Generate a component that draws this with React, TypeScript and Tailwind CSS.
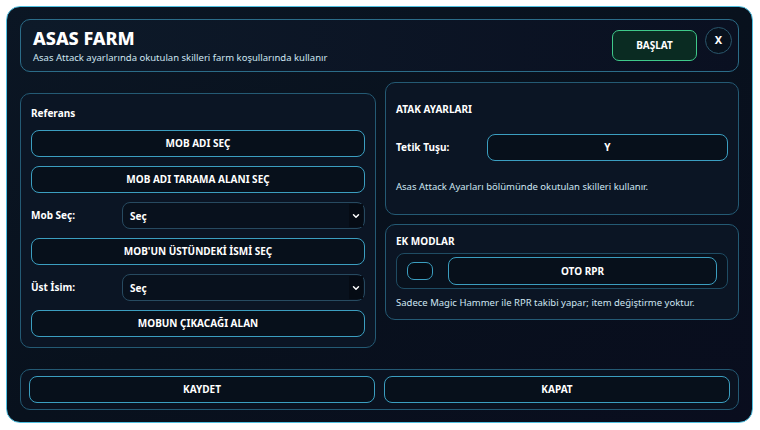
import { ChevronDown } from 'lucide-react';

const font = { fontFamily: '"Noto Sans", "Open Sans", sans-serif' };

function Btn({ label, className = '' }: { label: string; className?: string }) {
  return (
    <button className={`h-[27px] w-full rounded-[8px] border border-[#3b9ec0] bg-[#07101b] text-[10px] font-bold text-white ${className}`}>
      {label}
    </button>
  );
}

function SelectRow({ label }: { label: string }) {
  return (
    <div className="flex h-[27px] items-center">
      <span className="w-[91px] text-[10px] font-bold text-white">{label}</span>
      <div className="relative h-full flex-1 rounded-[8px] border border-[#274a60] bg-[#08111d]">
        <span className="absolute left-[7px] top-[6px] text-[10px] font-bold text-white">Seç</span>
        <span className="absolute right-[1px] top-[1px] flex h-[23px] w-[14px] items-center justify-center bg-[#050b14]">
          <ChevronDown size={10} strokeWidth={3.5} className="text-white" />
        </span>
      </div>
    </div>
  );
}

export default function App() {
  return (
    <div className="h-[430px] w-[760px] bg-white p-[6px] pr-[7px]" style={font}>
      <div className="flex h-[417px] w-[747px] flex-col gap-[10px] rounded-[14px] border border-[#4fbfe0] bg-gradient-to-br from-[#0b1624] via-[#08111d] to-[#090d1e] px-[13px] py-[12px]">
        {/* header */}
        <div className="flex h-[53px] shrink-0 items-center rounded-[10px] border border-[#2b6c88] bg-gradient-to-r from-[#0d1a29] to-[#0a1021] pl-[12px] pr-[6px]">
          <div className="flex-1">
            <div className="text-[18px] font-extrabold leading-[20px] text-white">ASAS FARM</div>
            <div className="mt-[4px] text-[9.5px] leading-[12px] text-[#cfe6f2]">Asas Attack ayarlarında okutulan skilleri farm koşullarında kullanır</div>
          </div>
          <button className="h-[31px] w-[85px] rounded-[7px] border border-[#3fc98a] bg-[#0a2b22] text-[10px] font-bold text-white">BAŞLAT</button>
          <button className="ml-[8px] mb-[11px] flex h-[27px] w-[27px] items-center justify-center rounded-full border border-[#2a566c] bg-[#08111d] text-[11px] font-bold text-white">X</button>
        </div>

        {/* content */}
        <div className="flex min-h-0 flex-1 gap-[9px]">
          <div className="flex w-[356px] flex-col gap-[9px] self-center rounded-[10px] border border-[#245a74] bg-[#0b1524] px-[10px] pb-[10px] pt-[12px]">
            <div className="mb-[1px] text-[10px] font-bold leading-[14px] text-white">Referans</div>
            <Btn label="MOB ADI SEÇ" />
            <Btn label="MOB ADI TARAMA ALANI SEÇ" />
            <SelectRow label="Mob Seç:" />
            <Btn label="MOB'UN ÜSTÜNDEKİ İSMİ SEÇ" />
            <SelectRow label="Üst İsim:" />
            <Btn label="MOBUN ÇIKACAĞI ALAN" />
          </div>

          <div className="flex flex-1 flex-col gap-[9px]">
            <div className="flex h-[133px] flex-col rounded-[10px] border border-[#245a74] bg-[#0b1524] px-[10px] pt-[19px]">
              <div className="text-[10px] font-bold leading-[14px] text-white">ATAK AYARLARI</div>
              <div className="mt-[18px] flex h-[27px] items-center">
                <span className="w-[91px] text-[10px] font-bold text-white">Tetik Tuşu:</span>
                <Btn label="Y" className="flex-1" />
              </div>
              <div className="mt-[19px] text-[9.5px] text-[#cfe6f2]">Asas Attack Ayarları bölümünde okutulan skilleri kullanır.</div>
            </div>

            <div className="flex h-[96px] flex-col rounded-[10px] border border-[#245a74] bg-[#0b1524] px-[10px] pt-[9px]">
              <div className="text-[10px] font-bold leading-[14px] text-white">EK MODLAR</div>
              <div className="mt-[5px] flex h-[36px] items-center gap-[15px] rounded-[8px] border border-[#1f4c63] bg-[#08111d] px-[10px]">
                <span className="h-[18px] w-[26px] rounded-[7px] border border-[#3b9ec0] bg-[#050b14]" />
                <Btn label="OTO RPR" className="h-[28px] flex-1" />
              </div>
              <div className="mt-[7px] text-[9.5px] text-[#cfe6f2]">Sadece Magic Hammer ile RPR takibi yapar; item değiştirme yoktur.</div>
            </div>
          </div>
        </div>

        {/* footer */}
        <div className="flex h-[41px] shrink-0 items-center gap-[9px] rounded-[10px] border border-[#245a74] bg-[#0a1220] px-[8px]">
          <Btn label="KAYDET" />
          <Btn label="KAPAT" />
        </div>
      </div>
    </div>
  );
}
